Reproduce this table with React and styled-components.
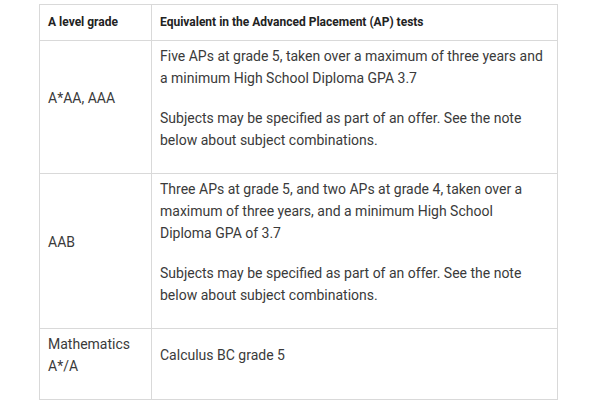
import React from 'react';
import styled, { createGlobalStyle } from 'styled-components';

const rows = [
  {
    grade: ['A*AA, AAA'],
    text: [
      'Five APs at grade 5, taken over a maximum of three years and a minimum High School Diploma GPA 3.7',
      'Subjects may be specified as part of an offer. See the note below about subject combinations.',
    ],
  },
  {
    grade: ['AAB'],
    text: [
      'Three APs at grade 5, and two APs at grade 4, taken over a maximum of three years, and a minimum High School Diploma GPA of 3.7',
      'Subjects may be specified as part of an offer. See the note below about subject combinations.',
    ],
  },
  {
    grade: ['Mathematics A*/A'],
    text: ['Calculus BC grade 5'],
  },
];

function App() {
  return (
    <>
      <GlobalStyle />
      <Page>
        <Table>
          <colgroup>
            <col style={{ width: 112 }} />
            <col />
          </colgroup>
          <thead>
            <tr>
              <HeadCell>A level grade</HeadCell>
              <HeadCell>Equivalent in the Advanced Placement (AP) tests</HeadCell>
            </tr>
          </thead>
          <tbody>
            {rows.map(({ grade, text }) => (
              <tr key={grade[0]}>
                <Cell>
                  {grade.map((g) => (
                    <Para key={g}>{g}</Para>
                  ))}
                </Cell>
                <Cell>
                  {text.map((t) => (
                    <Para key={t}>{t}</Para>
                  ))}
                </Cell>
              </tr>
            ))}
          </tbody>
        </Table>
      </Page>
    </>
  );
}

export default App;

const GlobalStyle = createGlobalStyle`
  body {
    margin: 0;
    background: #fff;
    font-family: Roboto, "Liberation Sans", sans-serif;
  }
`;

const Page = styled.div`
  padding: 4px 0 0 39px;
`;

const Table = styled.table`
  width: 519px;
  border-collapse: collapse;
  table-layout: fixed;
  border: 1px solid #d9d9d9;
`;

const HeadCell = styled.th`
  text-align: left;
  font-size: 12px;
  line-height: 15px;
  font-weight: 700;
  color: #222;
  padding: 10px 8px;
  border: 1px solid #d9d9d9;
`;

const Cell = styled.td`
  vertical-align: middle;
  padding: 4px 10px 4px 8px;
  border: 1px solid #d9d9d9;
  color: #3a3a3a;
  font-size: 14px;
  line-height: 22px;
`;

const Para = styled.p`
  margin: 0 0 18px;
`;
